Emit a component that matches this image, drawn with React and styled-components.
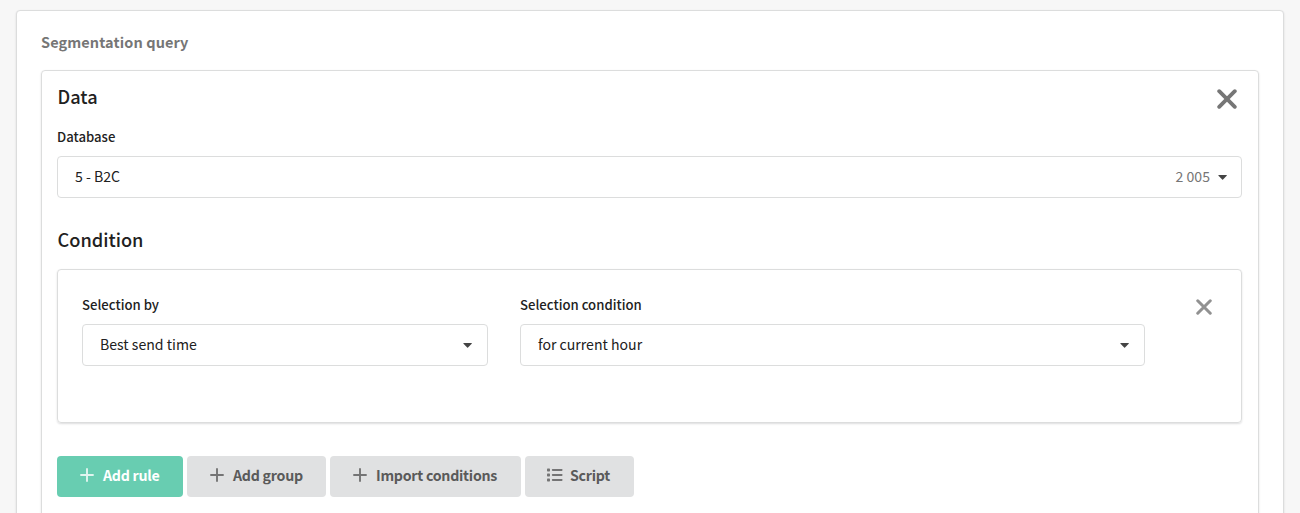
// Styled components: __________________________________
import styled, { createGlobalStyle } from 'styled-components';

const colors = {
   page: '#f7f7f7',
   border: '#dcdddd',
   text: '#212121',
   label: '#212121',
   muted: '#767676',
   primary: '#68cdb1',
   secondary: '#e0e1e2',
};

const GlobalStyle = createGlobalStyle`
   * {
      box-sizing: border-box;
   }
   body {
      margin: 0;
      height: 513px;
      overflow: hidden;
      background-color: ${colors.page};
      color: ${colors.text};
      font-family: 'Noto Sans CJK SC', 'Noto Sans', sans-serif;
   }
`;

// Page wrapper:
const Page = styled.main`
   padding: 10px 16px 0;
   height: 513px;
   overflow: hidden;
`;

// Outer card:
const Card = styled.section`
   height: 560px;
   padding: 20px 24px;
   background-color: #fff;
   border: 1px solid ${colors.border};
   border-radius: 4px;
   box-shadow: 0 1px 2px rgba(34, 36, 38, 0.15);
`;

const CardTitle = styled.h1`
   margin: 0 0 17px;
   font-size: 14.5px;
   font-weight: 700;
   line-height: 22px;
   letter-spacing: 0.1px;
   color: ${colors.muted};
`;

// Panel holding the data source and the conditions:
const Panel = styled.div`
   height: 500px;
   padding: 12px 16px 0 15px;
   border: 1px solid ${colors.border};
   border-radius: 4px;
   box-shadow: 0 1px 2px rgba(34, 36, 38, 0.15);
`;

const PanelHeader = styled.header`
   display: flex;
   justify-content: space-between;
   align-items: flex-start;
   height: 28px;
   padding-right: 5px;

   button {
      margin-top: 6px;
   }
`;

const Heading = styled.h2`
   margin: 0;
   padding-left: 0.5px;
   font-size: 18.2px;
   font-weight: 500;
   line-height: 26px;
`;

const ConditionHeading = styled(Heading)`
   margin: 28px 0 17px;
`;

const CloseButton = styled.button`
   display: block;
   padding: 0;
   border: 0;
   background: none;
   color: ${({ $light }) => ($light ? '#919191' : colors.muted)};
   line-height: 0;
`;

// Form fields:
const Field = styled.div`
   width: ${({ $width }) => $width || '100%'};
   margin-top: ${({ $top }) => $top || 0};
`;

const Label = styled.label`
   display: block;
   height: 20px;
   margin-bottom: 9px;
   font-size: 13.15px;
   font-weight: 500;
   line-height: 20px;
   color: ${colors.label};
`;

const Select = styled.div`
   display: flex;
   align-items: center;
   height: 42px;
   padding: 0 ${({ $right }) => $right || '15px'} 0 17px;
   border: 1px solid ${colors.border};
   border-radius: 4px;
   font-size: 14.1px;
   line-height: 20px;
`;

const Value = styled.span`
   flex: 1;
   padding-bottom: 2px;
`;

const Count = styled.span`
   margin-right: 8px;
   padding-bottom: 2px;
   color: ${colors.muted};
`;

const ConditionBox = styled.div`
   display: flex;
   align-items: flex-start;
   height: 154px;
   padding: 25px 29px 0 24px;
   border: 1px solid ${colors.border};
   border-radius: 4px;
   box-shadow: 0 1px 2px rgba(34, 36, 38, 0.15);

   > button {
      margin-top: 4px;
   }
`;

const Fields = styled.div`
   display: flex;
   flex: 1;
   gap: 32px;
`;

// Actions:
const Actions = styled.div`
   display: flex;
   gap: 4px;
   margin-top: 33px;
`;

const Button = styled.button`
   display: flex;
   align-items: center;
   width: ${({ $width }) => $width};
   height: 41px;
   padding: 0 0 3px ${({ $left }) => $left || '23px'};
   border: 0;
   border-radius: 4px;
   background-color: ${({ $primary }) =>
      $primary ? colors.primary : colors.secondary};
   color: ${({ $primary }) => ($primary ? '#fff' : '#5a5a5a')};
   font-family: inherit;
   font-size: 14.2px;
   font-weight: 700;
   line-height: 20px;
   letter-spacing: -0.26px;
   white-space: nowrap;

   svg {
      flex: none;
      margin-right: ${({ $gap }) => $gap || '9px'};
      opacity: 0.8;
   }
`;

// Icons: ______________________________________________
const CloseIcon = ({ size, stroke }) => (
   <svg width={size} height={size} viewBox="0 0 20 20" fill="none">
      <path
         d="M2.2 2.2L17.8 17.8M17.8 2.2L2.2 17.8"
         stroke="currentColor"
         strokeWidth={stroke}
         strokeLinecap="round"
      />
   </svg>
);

const CaretIcon = () => (
   <svg width="9" height="5" viewBox="0 0 9 5">
      <path
         d="M0.7 0H8.5Q9 0.3 8.7 0.8L5 4.6Q4.6 5 4.2 4.6L0.5 0.8Q0.2 0.3 0.7 0Z"
         fill="#444"
      />
   </svg>
);

const PlusIcon = () => (
   <svg width="14" height="14" viewBox="0 0 14 14" fill="none">
      <path
         d="M7 1V13M1 7H13"
         stroke="currentColor"
         strokeWidth="1.9"
         strokeLinecap="round"
      />
   </svg>
);

const ListIcon = () => (
   <svg width="16" height="14" viewBox="0 0 16 14" fill="currentColor">
      <rect x="0" y="0.5" width="3" height="3" rx="0.7" />
      <rect x="0" y="5.5" width="3" height="3" rx="0.7" />
      <rect x="0" y="10.5" width="3" height="3" rx="0.7" />
      <rect x="4.8" y="1.1" width="10.8" height="1.8" rx="0.8" />
      <rect x="4.8" y="6.1" width="10.8" height="1.8" rx="0.8" />
      <rect x="4.8" y="11.1" width="10.8" height="1.8" rx="0.8" />
   </svg>
);

// _______________________________________

const App = () => {
   return (
      <Page>
         <GlobalStyle />
         <Card>
            <CardTitle>Segmentation query</CardTitle>
            <Panel>
               <PanelHeader>
                  <Heading>Data</Heading>
                  <CloseButton aria-label="Remove data">
                     <CloseIcon size={20} stroke={3.8} />
                  </CloseButton>
               </PanelHeader>
               <Field $top="16px">
                  <Label>Database</Label>
                  <Select $right="14px">
                     <Value>5 - B2C</Value>
                     <Count>2 005</Count>
                     <CaretIcon />
                  </Select>
               </Field>
               <ConditionHeading as="h2">Condition</ConditionHeading>
               <ConditionBox>
                  <Fields>
                     <Field $width="406px">
                        <Label>Selection by</Label>
                        <Select>
                           <Value>Best send time</Value>
                           <CaretIcon />
                        </Select>
                     </Field>
                     <Field $width="625px">
                        <Label>Selection condition</Label>
                        <Select>
                           <Value>for current hour</Value>
                           <CaretIcon />
                        </Select>
                     </Field>
                  </Fields>
                  <CloseButton $light aria-label="Remove condition">
                     <CloseIcon size={16} stroke={3.8} />
                  </CloseButton>
               </ConditionBox>
               <Actions>
                  <Button $primary $width="126px">
                     <PlusIcon />
                     Add rule
                  </Button>
                  <Button $width="139px">
                     <PlusIcon />
                     Add group
                  </Button>
                  <Button $width="191px">
                     <PlusIcon />
                     Import conditions
                  </Button>
                  <Button $width="109px" $left="22px" $gap="7px">
                     <ListIcon />
                     Script
                  </Button>
               </Actions>
            </Panel>
         </Card>
      </Page>
   );
};

export default App;
